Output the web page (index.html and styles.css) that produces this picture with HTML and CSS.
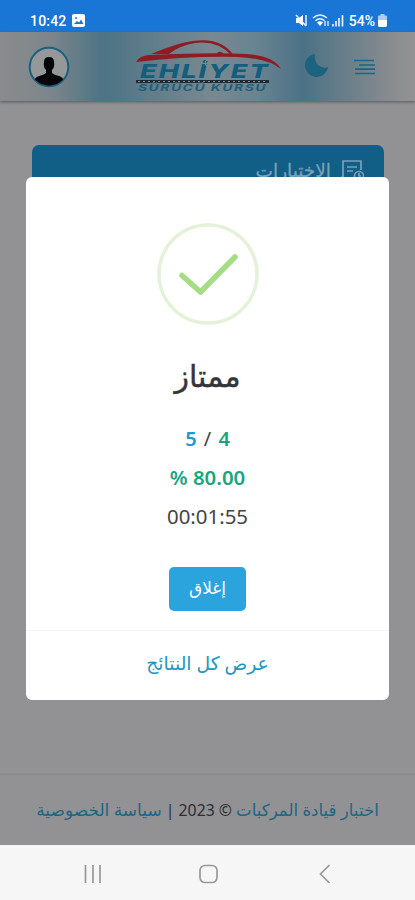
FILE: index.html
```html
<!DOCTYPE html>
<html lang="ar" dir="rtl">
<head>
<meta charset="utf-8">
<title>اختبار قيادة المركبات</title>
<link rel="stylesheet" href="styles.css">
</head>
<body>
<div class="phone">
  <div class="status" dir="ltr">
    <span class="clock">10:42</span>
    <svg class="photo" width="13" height="13" viewBox="0 0 13 13"><rect width="13" height="13" rx="2" fill="#fff"/><path d="M2 10l3-3 2 1.500 2-3 2.500 4.500z" fill="#1976d7"/><circle cx="4" cy="4" r="1" fill="#1976d7"/></svg>
    <span class="spacer"></span>
    <svg width="49" height="15" viewBox="0 0 49 15" fill="none" stroke="#e8f1fc" stroke-width="1.500"><path d="M1 5h3l4-3v11l-4-3H1z" fill="#fff" stroke="none"/><path d="M1 2l10 11M11 2v11"/><path d="M18 5q7-6 14 0M20.500 7.800q4.500-4 9 0"/><path d="M22 9.500q3-2.500 6 0l-3 3.500z" fill="#fff" stroke="none"/><path d="M30 8v5M33 8v5" stroke-width="1.300"/><path d="M38 11v2.500M41 8v5.500M44 5v8.500M47.500 2v11.500" stroke-width="1.700"/></svg>
    <span class="percent">54%</span>
    <svg width="9" height="13" viewBox="0 0 9 13"><path d="M2.500 0h4v1.500H8q1 0 1 1V11q0 2-2 2H2q-2 0-2-2V2.500q0-1 1-1h1.500z" fill="#a9cdf5"/><path d="M0 6h9v5q0 2-2 2H2q-2 0-2-2z" fill="#fff"/></svg>
  </div>
  <header class="header" dir="ltr">
    <svg class="avatar" width="42" height="42" viewBox="0 0 42 42"><defs><clipPath id="face"><circle cx="21" cy="21" r="18.700"/></clipPath></defs><circle cx="21" cy="21" r="19.300" fill="#969799" stroke="#16617f" stroke-width="2"/><g clip-path="url(#face)" fill="#050607"><path d="M16 16q0-5 5-5t5 5q1 5-2 8v3q2 2 7 3 4 1 5 5v7H6v-7q1-4 5-5 5-1 7-3v-3q-3-3-2-8z"/></g></svg>
    <svg class="logo" width="150" height="58" viewBox="0 0 150 58">
      <path d="M1 26q3-6 13-7 64-3 98-1 27 2 34 15-14-11-44-12-50-1-101 5z" fill="#8e1c25"/>
      <path d="M16 18q26-11 42-13 29-4 41 15l-3-1Q82 4 60 7 43 10 34 18z" fill="#8e1c25"/>
      <path d="M82 18q1-4 6-1l2 3h-9z" fill="#8e1c25"/>
      <text x="5" y="42" class="brand" textLength="130" lengthAdjust="spacingAndGlyphs">EHLİYET</text>
      <circle cx="73" cy="27" r="3" fill="none" stroke="#858b8e"/>
      <path d="M1 44h133v3H1z" fill="#202a30"/><path d="M3 45.500h130" stroke="#7c8e98" stroke-dasharray="2 3"/>
      <text x="3" y="55" class="tagline" textLength="129" lengthAdjust="spacingAndGlyphs">SÜRÜCÜ KURSU</text>
    </svg>
    <svg class="moon" width="24" height="25" viewBox="0 0 24 25"><path d="M10 1C8 9 15 17 23 14 22 20 17 24 11.500 24S0 19 0 12.500 4.500 2 10 1z" fill="#1c6380"/></svg>
    <svg class="menu" width="22" height="16" viewBox="0 0 22 16"><path d="M0 1.500h20M5 6h16M1 10.200h20M1 14.500h20" stroke="#1d6681" stroke-width="1.700"/></svg>
  </header>
  <main class="page">
    <section class="panel">
      <svg width="23" height="23" viewBox="0 0 23 23" fill="none" stroke="#79a0b8" stroke-width="1.700"><path d="M11 20H4q-3 0-3-3h1V1h18v9M6 7h10M6 11h6"/><circle cx="18" cy="16" r="4.500"/><path d="M18 13v3h2"/></svg>
      <span class="ptitle">الاختبارات</span>
    </section>
  </main>
  <footer class="footer"><span><a>اختبار قيادة المركبات</a> © 2023 | <a class="privacy">سياسة الخصوصية</a></span></footer>
  <nav class="nav" dir="ltr">
    <svg width="18" height="18" viewBox="0 0 18 18" class="key"><path d="M1.500 0v18M9 0v18M16 0v18"/></svg>
    <svg width="20" height="20" viewBox="0 0 20 20" class="key home"><rect x="1" y="1.500" width="17" height="17" rx="5"/></svg>
    <svg width="12" height="20" viewBox="0 0 12 20" class="key"><path d="M10.500 1L1.500 10l9 9"/></svg>
  </nav>
  <div class="modal">
    <svg class="tick" width="102" height="102" viewBox="0 0 102 102" fill="none"><circle cx="51" cy="51" r="49" stroke="#e3f2d9" stroke-width="3.500"/><path d="M25 52.500L43.500 69 78 34" stroke="#a5dc86" stroke-width="5.500" stroke-linecap="round" stroke-linejoin="round"/></svg>
    <h2 class="title">ممتاز</h2>
    <div class="row score"><b>4</b> / <b class="blue">5</b></div>
    <div class="row green" dir="ltr">% 80.00</div>
    <div class="row time">00:01:55</div>
    <button class="close">إغلاق</button>
    <div class="all"><a>عرض كل النتائج</a></div>
  </div>
</div>
</body>
</html>
```
FILE: styles.css
```css
* { box-sizing: border-box; }
body { margin: 0; font-family: "Noto Sans", "DejaVu Sans", sans-serif; }
.phone { position: relative; width: 415px; height: 900px; display: flex; flex-direction: column; background: #929294; overflow: hidden; }
.status { height: 32px; flex: none; display: flex; align-items: center; padding: 9px 28px 0 30px; background: #1976d7; color: #fff; font: 500 14px Roboto, sans-serif; }
.clock { width: 37px; letter-spacing: .2px; }
.photo { margin-left: 5px; }
.spacer { flex: 1; }
.percent { margin: 0 3px 0 5px; }
.header { height: 69px; flex: none; display: flex; align-items: center; padding: 0 39px 0 28px; background: linear-gradient(90deg, #898b8d 0, #7d868b 12%, #4d7385 25%, #5d7b8a 34%, #788990 51%, #688391 62%, #4c7185 73%, #687e89 83%, #8d8e90 96%, #929294 100%); box-shadow: 0 1px 3px #55575b; }
.logo { margin-left: 65px; margin-top: -3px; }
.brand { font: italic 800 19px Inter, sans-serif; letter-spacing: 1.5px; fill: #145d7d; }
.tagline { font: italic bold 9.5px Inter, sans-serif; letter-spacing: 1px; fill: #235e77; }
.moon { margin-left: 20px; margin-top: -2px; }
.menu { margin-left: 25px; }
.page { flex: 1; padding: 44px 31px 0 32px; }
.panel { height: 80px; display: flex; align-items: flex-start; gap: 10px; padding: 15px 20px; background: #115f87; border-radius: 7px; color: #79a0b8; }
.ptitle { font-size: 18.5px; line-height: 20px; -webkit-text-stroke: .3px #79a0b8; }
.footer { height: 71px; flex: none; border-top: 1px solid #87888a; display: flex; align-items: center; justify-content: center; color: #2c2d30; font-size: 15.8px; white-space: nowrap; padding-bottom: 2px; }
.footer a { color: #1c6684; font-size: 16.6px; }
.footer .privacy { font-size: 17px; }
.nav { height: 55px; flex: none; background: #f6f6f6; display: flex; align-items: center; justify-content: space-between; padding: 3px 84px 0 84px; }
.key { fill: none; stroke: #98999a; stroke-width: 1.7; }
.home { margin-right: 3px; }
.modal { position: absolute; left: 26px; top: 177px; width: 363px; height: 523px; display: flex; flex-direction: column; align-items: center; background: #fff; border-radius: 6px; color: #444; }
.tick { margin-top: 46px; flex: none; }
.title { margin: 28px 0 20px; height: 46px; line-height: 46px; font-size: 30px; font-weight: 400; color: #343538; -webkit-text-stroke: .4px #343538; }
.row { height: 39px; line-height: 39px; font-size: 20px; white-space: pre; }
.row b, .green { color: #1ba57e; font-weight: 600; }
.score { word-spacing: 2px; }
.green, .time { font-size: 20.4px; }
.row .blue { color: #2297d5; }
.close { margin: 31px 0 0; width: 77px; height: 44px; flex: none; padding: 0 0 3px; border: 0; border-radius: 5px; background: #2ba3dc; color: #fff; font: 17px "Noto Sans", "DejaVu Sans", sans-serif; }
.all { margin-top: 19px; width: 100%; flex: 1; border-top: 1px solid #f4f4f4; text-align: center; color: #2396c0; font-size: 18.8px; line-height: 64px; }
```
